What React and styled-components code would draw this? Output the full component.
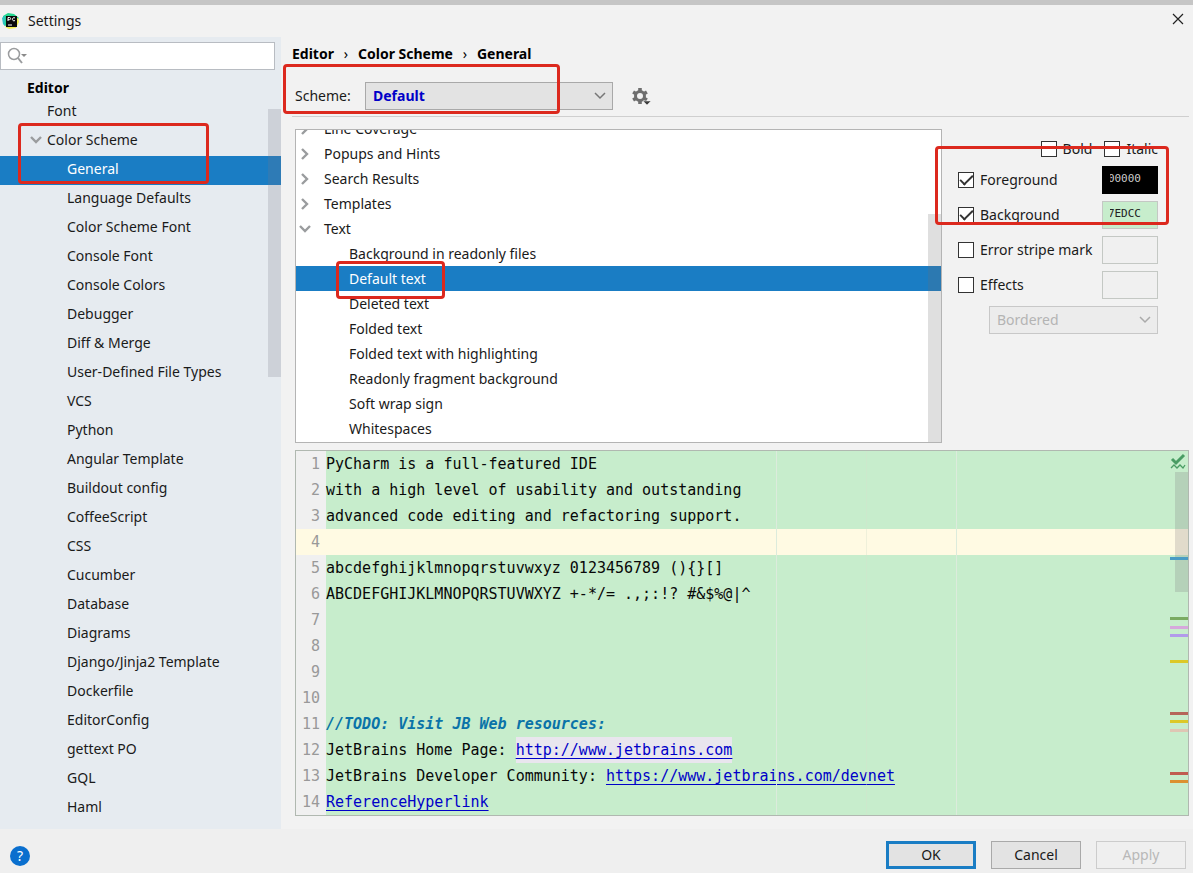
import { useState } from "react";
import styled, { createGlobalStyle } from "styled-components";

const SIDEBAR_ITEMS = [
	{ label: "Font", level: 1 },
	{ label: "Color Scheme", level: 1, open: true },
	{ label: "General", level: 2 },
	{ label: "Language Defaults", level: 2 },
	{ label: "Color Scheme Font", level: 2 },
	{ label: "Console Font", level: 2 },
	{ label: "Console Colors", level: 2 },
	{ label: "Debugger", level: 2 },
	{ label: "Diff & Merge", level: 2 },
	{ label: "User-Defined File Types", level: 2 },
	{ label: "VCS", level: 2 },
	{ label: "Python", level: 2 },
	{ label: "Angular Template", level: 2 },
	{ label: "Buildout config", level: 2 },
	{ label: "CoffeeScript", level: 2 },
	{ label: "CSS", level: 2 },
	{ label: "Cucumber", level: 2 },
	{ label: "Database", level: 2 },
	{ label: "Diagrams", level: 2 },
	{ label: "Django/Jinja2 Template", level: 2 },
	{ label: "Dockerfile", level: 2 },
	{ label: "EditorConfig", level: 2 },
	{ label: "gettext PO", level: 2 },
	{ label: "GQL", level: 2 },
	{ label: "Haml", level: 2 },
];

const ATTRIBUTES = [
	{ label: "Line Coverage", group: true },
	{ label: "Popups and Hints", group: true },
	{ label: "Search Results", group: true },
	{ label: "Templates", group: true },
	{ label: "Text", group: true, open: true },
	{ label: "Background in readonly files" },
	{ label: "Default text" },
	{ label: "Deleted text" },
	{ label: "Folded text" },
	{ label: "Folded text with highlighting" },
	{ label: "Readonly fragment background" },
	{ label: "Soft wrap sign" },
	{ label: "Whitespaces" },
];

const CODE = [
	{ text: "PyCharm is a full-featured IDE" },
	{ text: "with a high level of usability and outstanding" },
	{ text: "advanced code editing and refactoring support." },
	{ current: true },
	{ text: "abcdefghijklmnopqrstuvwxyz 0123456789 (){}[]" },
	{ text: "ABCDEFGHIJKLMNOPQRSTUVWXYZ +-*/= .,;:!? #&$%@|^" },
	{},
	{},
	{},
	{},
	{ todo: "//TODO: Visit JB Web resources:" },
	{ text: "JetBrains Home Page: ", link: "http://www.jetbrains.com", followed: true },
	{ text: "JetBrains Developer Community: ", link: "https://www.jetbrains.com/devnet" },
	{ link: "ReferenceHyperlink" },
];

const MARKS = [
	{ top: 106, color: "#4a9cc4" },
	{ top: 166, color: "#7aab62" },
	{ top: 175, color: "#d6a8dc" },
	{ top: 183, color: "#b29aea" },
	{ top: 209, color: "#dcc828" },
	{ top: 261, color: "#b5655a" },
	{ top: 269, color: "#dcc828" },
	{ top: 278, color: "#dfc6b4" },
	{ top: 321, color: "#c05c50" },
	{ top: 329, color: "#dc9030" },
];

const Chevron = ({ open }) => (
	<svg width="14" height="14" viewBox="0 0 14 14" fill="none" stroke="#9a9c9e" strokeWidth="2.400" aria-hidden="true">
		<path d={open ? "M2 4l5 5 5-5" : "M4 2l5 5-5 5"} />
	</svg>
);

const Logo = () => (
	<svg width="18" height="18" viewBox="0 0 18 18" aria-hidden="true">
		<path d="M1 4L6 1l6 1 5 4-3 3-11 5-2-3z" fill="#22d88f" />
		<path d="M10 7l6-1 1 4-3 6-7 1-4-2 6-4z" fill="#f5f04e" />
		<path d="M0 6l3-3v11l-2-2z" fill="#2fc3c0" />
		<rect x="4" y="4" width="11" height="11" fill="#0b0b0b" />
		<path d="M6 9V5.500h1.500a1 1 0 0 1 0 2.200H6M13 6a1.600 1.600 0 1 0 0 2.500" fill="none" stroke="#fff" strokeWidth="1" />
		<path d="M6 13h4" stroke="#fff" />
	</svg>
);

const Arrow = () => (
	<SelectArrow width="14" height="14" viewBox="0 0 14 14" fill="none" stroke="currentColor" strokeWidth="1.500" aria-hidden="true">
		<path d="M2 4l5 5 5-5" />
	</SelectArrow>
);

const Gear = () => (
	<svg width="22" height="22" viewBox="0 0 22 22" aria-hidden="true">
		<g fill="none" stroke="#6e6e6e">
			<circle cx="10" cy="11" r="4.500" strokeWidth="3" />
			<path d="M10 3v3M10 16v3M3.100 7l2.600 1.500M14.300 13.500l2.600 1.500M3.100 15l2.600-1.500M14.300 8.500L16.900 7" strokeWidth="3.600" />
		</g>
		<path d="M13 16h8l-4 4z" fill="#3c3c3c" stroke="#f2f2f2" strokeWidth="0.500" />
	</svg>
);

const ColorOption = ({ id, label, checked, color, code, dark }) => {
	const [on, setOn] = useState(checked);
	return (
		<OptionRow>
			<CheckLabel htmlFor={id}>
				<CheckBox id={id} type="checkbox" checked={on} onChange={() => setOn(!on)} />
				{label}
			</CheckLabel>
			<Swatch type="button" aria-label={`${label} color`} $color={color} $dark={dark}>
				{code && <SwatchCode>{code}</SwatchCode>}
			</Swatch>
		</OptionRow>
	);
};

const App = () => {
	const [page, setPage] = useState("General");
	const [attribute, setAttribute] = useState("Default text");

	return (
		<Window>
			<GlobalStyle />
			<TitleBar>
				<Logo />
				<Title>Settings</Title>
				<CloseButton type="button" aria-label="Close">
					<svg width="12" height="12" viewBox="0 0 12 12" stroke="#222" strokeWidth="1.200">
						<path d="M1 1l10 10M11 1L1 11" />
					</svg>
				</CloseButton>
			</TitleBar>

			<Body>
				<Sidebar>
					<SearchBox>
						<svg width="22" height="18" viewBox="0 0 22 18" fill="none" stroke="#9a9c9e" strokeWidth="1.500" aria-hidden="true">
							<circle cx="7" cy="7" r="5.500" />
							<path d="M11 11l4 5" strokeWidth="2" />
							<path d="M14 7h6l-3 3z" fill="#8a8a8a" stroke="none" />
						</svg>
						<SearchInput type="text" aria-label="Search settings" />
					</SearchBox>
					<SidebarHeading>Editor</SidebarHeading>
					<SidebarTree>
						{SIDEBAR_ITEMS.map((item) => (
							<SidebarItem
								key={item.label}
								$level={item.level}
								$active={item.label === page}
								onClick={() => setPage(item.label)}
							>
								{item.open && <Chevron open />}
								{item.label}
							</SidebarItem>
						))}
						<SidebarThumb />
						<Marker $left={18} $top={25} $width={191} $height={61} />
					</SidebarTree>
				</Sidebar>

				<Main>
					<Breadcrumb>
						<span>Editor</span>
						<Separator>›</Separator>
						<span>Color Scheme</span>
						<Separator>›</Separator>
						<span>General</span>
					</Breadcrumb>

					<SchemeRow>
						<SchemeLabel htmlFor="scheme">Scheme:</SchemeLabel>
						<SelectWrap $width={248}>
							<Select id="scheme" $strong>
								<option>Default</option>
							</Select>
							<Arrow />
						</SelectWrap>
						<IconButton type="button" aria-label="Scheme actions">
							<Gear />
						</IconButton>
						<Marker $left={-9} $top={-11} $width={277} $height={50} />
					</SchemeRow>

					<Panels>
						<AttributeBox>
							<AttributeTree>
								{ATTRIBUTES.map((item) => (
									<AttributeItem
										key={item.label}
										$group={item.group}
										$active={item.label === attribute}
										onClick={() => setAttribute(item.label)}
									>
										{item.group && <Chevron open={item.open} />}
										{item.label}
									</AttributeItem>
								))}
							</AttributeTree>
							<AttributeThumb />
							<Marker $left={40} $top={131} $width={109} $height={38} />
						</AttributeBox>

						<Options>
							<FontStyles>
								<CheckLabel htmlFor="bold">
									<CheckBox id="bold" type="checkbox" />
									Bold
								</CheckLabel>
								<CheckLabel htmlFor="italic">
									<CheckBox id="italic" type="checkbox" />
									Italic
								</CheckLabel>
							</FontStyles>
							<ColorOption id="foreground" label="Foreground" checked color="#000" code="00000" dark />
							<ColorOption id="background" label="Background" checked color="#c7edcc" code="7EDCC" />
							<ColorOption id="stripe" label="Error stripe mark" checked={false} />
							<ColorOption id="effects" label="Effects" checked={false} />
							<EffectRow>
								<SelectWrap $width={169}>
									<Select aria-label="Effect type" disabled>
										<option>Bordered</option>
									</Select>
									<Arrow />
								</SelectWrap>
							</EffectRow>
							<Marker $left={-7} $top={17} $width={234} $height={79} />
						</Options>
					</Panels>

					<Preview>
						<Lines>
							{CODE.map((line, i) => (
								<Line key={i} $current={line.current}>
									<LineNumber>{i + 1}</LineNumber>
									<Code>
										{line.text}
										{line.todo && <Todo>{line.todo}</Todo>}
										{line.link && (
											<CodeLink href={`#line-${i + 1}`} $followed={line.followed}>
												{line.link}
											</CodeLink>
										)}
									</Code>
								</Line>
							))}
						</Lines>
						<Guide $left={480} />
						<Guide $left={570} $faint />
						<Guide $left={660} />
						<Stripe>
							<svg width="16" height="17" viewBox="0 0 16 17" fill="none" stroke="#499c63" aria-hidden="true">
								<path d="M2 6l4 4 8-8" strokeWidth="3" />
								<path d="M1 15l3-3 3 3 3-3 3 3 2-3" strokeWidth="1.300" />
							</svg>
							<StripeThumb />
							{MARKS.map((mark) => (
								<Mark key={mark.top} style={{ top: mark.top, backgroundColor: mark.color }} />
							))}
						</Stripe>
					</Preview>
				</Main>
			</Body>

			<Footer>
				<HelpButton type="button" aria-label="Help">?</HelpButton>
				<Button type="button" $primary>OK</Button>
				<Button type="button">Cancel</Button>
				<Button type="button" disabled>Apply</Button>
			</Footer>
		</Window>
	);
};

export default App;

const GlobalStyle = createGlobalStyle`
	* {
		box-sizing: border-box;
	}

	body {
		margin: 0;
		font-family: "Noto Sans", "Open Sans", sans-serif;
		font-size: 14px;
		line-height: 20px;
		color: #1a1a1a;
		background-color: #f2f2f2;
	}

	button,
	input,
	select {
		font: inherit;
		color: inherit;
	}
`;

const Window = styled.div`
	min-height: 100vh;
	display: flex;
	flex-direction: column;
	border-top: 5px solid #c6c6c6;
	background-color: #f2f2f2;
`;

const TitleBar = styled.header`
	height: 32px;
	padding: 0 9px 0 2px;
	display: flex;
	align-items: center;
	gap: 8px;
`;

const Title = styled.h1`
	margin: 0;
	flex: 1;
	font-size: 14px;
	font-weight: 400;
`;

const CloseButton = styled.button`
	padding: 0 0 4px;
	border: none;
	background: none;
	display: flex;
`;

const Body = styled.div`
	flex: 1;
	display: flex;
`;

const Sidebar = styled.nav`
	width: 281px;
	flex-shrink: 0;
	padding-top: 5px;
	background-color: #e6ebf0;
`;

const SearchBox = styled.div`
	height: 28px;
	margin-right: 6px;
	padding-left: 6px;
	display: flex;
	align-items: center;
	border: 1px solid #b8bcc2;
	background-color: #fff;
`;

const SearchInput = styled.input`
	flex: 1;
	min-width: 0;
	border: none;
	outline: none;
	background: none;
`;

const SidebarHeading = styled.h2`
	margin: 8px 0 0;
	padding-left: 27px;
	font-size: 14px;
	line-height: 20px;
	font-weight: 700;
	color: #000;
`;

const SidebarTree = styled.ul`
	position: relative;
	margin: 0;
	padding: 0;
	list-style: none;
`;

const SidebarItem = styled.li`
	height: 29px;
	padding: 0 0 3px ${({ $level }) => ($level === 2 ? 67 : 47)}px;
	display: flex;
	align-items: center;
	background-color: ${({ $active }) => ($active ? "#1a7dc4" : "transparent")};
	color: ${({ $active }) => ($active ? "#fff" : "inherit")};

	svg {
		margin-left: -18px;
		margin-right: 4px;
	}
`;

const SidebarThumb = styled.div`
	position: absolute;
	top: 11px;
	right: 0;
	width: 13px;
	height: 268px;
	background-color: rgba(120, 120, 130, 0.22);
`;

const Marker = styled.div`
	position: absolute;
	z-index: 2;
	left: ${({ $left }) => $left}px;
	top: ${({ $top }) => $top}px;
	width: ${({ $width }) => $width}px;
	height: ${({ $height }) => $height}px;
	border: 3px solid #dc291e;
	border-radius: 4px;
	pointer-events: none;
`;

const Main = styled.main`
	flex: 1;
	min-width: 0;
	padding: 7px 4px 13px 11px;
	display: flex;
	flex-direction: column;
`;

const Breadcrumb = styled.div`
	display: flex;
	align-items: center;
	font-weight: 700;
	color: #000;
`;

const Separator = styled.span`
	width: 24px;
	text-align: center;
	font-weight: 400;
`;

const SchemeRow = styled.div`
	position: relative;
	margin-top: 11px;
	padding: 7px 0 7px 3px;
	height: 42px;
	display: flex;
	align-items: center;
	border-bottom: 1px solid #cfcfcf;
`;

const SchemeLabel = styled.label`
	width: 70px;
`;

const SelectWrap = styled.div`
	position: relative;
	width: ${({ $width }) => $width}px;
`;

const Select = styled.select`
	width: 100%;
	height: 28px;
	padding: 0 7px;
	appearance: none;
	border: 1px solid #a9a9a9;
	border-radius: 0;
	background-color: #e3e3e3;
	font-weight: ${({ $strong }) => ($strong ? 700 : 400)};
	color: ${({ $strong }) => ($strong ? "#0000c8" : "inherit")};

	&:disabled {
		border-color: #c8c8c8;
		background-color: #ececec;
		color: #b4b4b4;
		opacity: 1;
	}
`;

const SelectArrow = styled.svg`
	position: absolute;
	top: 7px;
	right: 6px;
	color: #777;
	pointer-events: none;
`;

const IconButton = styled.button`
	margin-left: 17px;
	padding: 0;
	display: flex;
	border: none;
	background: none;
`;

const Panels = styled.div`
	margin: 12px 0 7px 3px;
	display: flex;
`;

const AttributeBox = styled.div`
	position: relative;
	flex: 1;
	min-width: 0;
	border: 1px solid #b4b4b4;
	background-color: #fff;
	overflow: hidden;
`;

const AttributeTree = styled.ul`
	margin: -14px 0 0;
	padding: 0 0 1px;
	list-style: none;
`;

const AttributeItem = styled.li`
	height: 25px;
	padding-left: ${({ $group }) => ($group ? 2 : 53)}px;
	display: flex;
	align-items: center;
	gap: 12px;
	background-color: ${({ $active }) => ($active ? "#1a7dc4" : "transparent")};
	color: ${({ $active }) => ($active ? "#fff" : "inherit")};
`;

const AttributeThumb = styled.div`
	position: absolute;
	top: 84px;
	right: 0;
	bottom: 0;
	width: 13px;
	background-color: rgba(110, 110, 110, 0.22);
`;

const Options = styled.div`
	position: relative;
	width: 247px;
	padding: 10px 31px 0 16px;
	display: flex;
	flex-direction: column;
	gap: 7px;
`;

const FontStyles = styled.div`
	height: 20px;
	display: flex;
	justify-content: flex-end;
	gap: 12px;
`;

const OptionRow = styled.div`
	height: 28px;
	display: flex;
	align-items: center;
	justify-content: space-between;
`;

const CheckLabel = styled.label`
	display: flex;
	align-items: center;
	gap: 6px;
	white-space: nowrap;
`;

const CheckBox = styled.input`
	appearance: none;
	width: 16px;
	height: 16px;
	margin: 0;
	flex-shrink: 0;
	display: grid;
	place-items: center;
	border: 1px solid #333;
	background-color: #fff;

	&:checked::before {
		content: "";
		width: 11px;
		height: 5px;
		margin-bottom: 3px;
		border-left: 2px solid #333;
		border-bottom: 2px solid #333;
		transform: rotate(-45deg);
	}
`;

const Swatch = styled.button`
	width: 56px;
	height: 28px;
	padding: 0 0 2px 7px;
	display: flex;
	align-items: center;
	border: 1px solid ${({ $dark }) => ($dark ? "#000" : "#c4c8c4")};
	background-color: ${({ $color }) => $color || "#f0f0f0"};
	color: ${({ $dark }) => ($dark ? "#ccc" : "#222")};
`;

const SwatchCode = styled.span`
	width: 31px;
	display: flex;
	justify-content: flex-end;
	overflow: hidden;
	font-family: "DejaVu Sans Mono", monospace;
	font-size: 11px;
	line-height: 14px;
`;

const EffectRow = styled.div`
	display: flex;
	justify-content: flex-end;

	svg {
		color: #aaa;
	}
`;

const Preview = styled.section`
	position: relative;
	margin-left: 3px;
	display: flex;
	border: 1px solid #b0b8b0;
	background: linear-gradient(to right, #f0f0f0 30px, #c7edcc 30px);
	font-family: "DejaVu Sans Mono", monospace;
	font-size: 15px;
	overflow: hidden;
`;

const Lines = styled.div`
	flex: 1;
`;

const Line = styled.div`
	height: 26px;
	display: flex;
	line-height: 26px;
	background-color: ${({ $current }) => ($current ? "#fffae3" : "transparent")};
`;

const LineNumber = styled.span`
	width: 30px;
	padding-right: 6px;
	display: flex;
	justify-content: flex-end;
	color: #999;
`;

const Code = styled.code`
	font-family: inherit;
	white-space: pre;
	color: #080808;
`;

const Todo = styled.em`
	font-weight: 700;
	color: #0a73a8;
`;

const CodeLink = styled.a`
	padding: 4px 0;
	color: #0000c8;
	background-color: ${({ $followed }) => ($followed ? "#e9e6ee" : "transparent")};
	text-decoration: underline;
	text-underline-offset: 3px;
`;

const Guide = styled.div`
	position: absolute;
	top: 0;
	bottom: 0;
	left: ${({ $left }) => $left}px;
	width: 1px;
	background-color: ${({ $faint }) => ($faint ? "rgba(214, 226, 206, 0.4)" : "#dcebdc")};
`;

const Stripe = styled.div`
	position: absolute;
	top: 0;
	right: 0;
	bottom: 0;
	width: 18px;
	padding-top: 2px;
`;

const StripeThumb = styled.div`
	position: absolute;
	top: 21px;
	right: 0;
	width: 13px;
	height: 120px;
	background-color: rgba(120, 110, 120, 0.22);
`;

const Mark = styled.span`
	position: absolute;
	left: 0;
	right: 0;
	height: 3px;
`;

const Footer = styled.footer`
	height: 44px;
	padding: 0 7px 4px 10px;
	display: flex;
	align-items: flex-end;
	justify-content: flex-end;
	gap: 15px;
	background-color: #efefef;
`;

const HelpButton = styled.button`
	width: 20px;
	height: 20px;
	margin: 0 auto 3px 0;
	padding: 0;
	border: none;
	border-radius: 50%;
	background-color: #0a6fce;
	color: #fff;
	line-height: 20px;
`;

const Button = styled.button`
	width: 90px;
	height: 28px;
	padding: 0;
	border: ${({ $primary }) => ($primary ? "3px solid #1a7dc4" : "1px solid #a9a9a9")};
	background-color: #e3e3e3;

	&:disabled {
		border-color: #ccc;
		background-color: #efefef;
		color: #b8b8b8;
	}
`;
